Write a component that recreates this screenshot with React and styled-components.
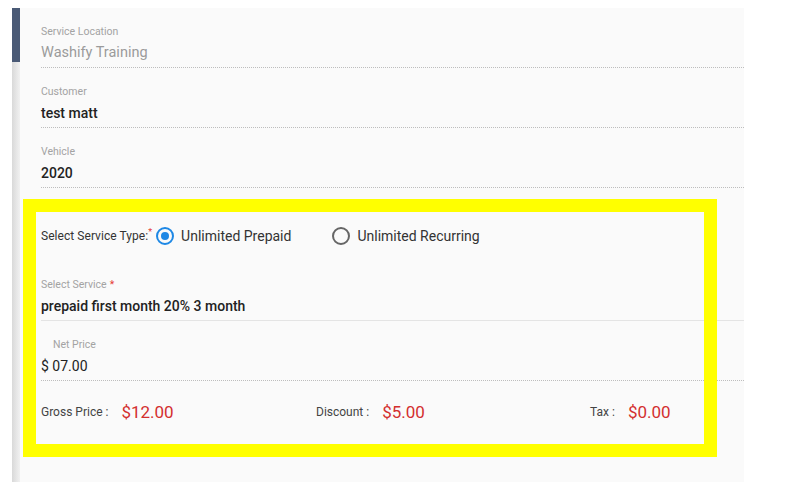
import React from 'react'
import styled, { createGlobalStyle } from 'styled-components'

const GlobalStyle = createGlobalStyle`
  html, body {
    margin: 0;
    padding: 0;
    background: #ffffff;
    font-family: Roboto, "Liberation Sans", Arial, sans-serif;
  }
`

const Page = styled.div`
  display: flex;
  padding: 8px 0 0 12px;
  height: 474px;
`

const SideStrip = styled.div`
  width: 8px;
  display: flex;
  flex-direction: column;
`

const SideActive = styled.div`
  height: 54px;
  background: #4a5a76;
`

const SideRest = styled.div`
  flex: 1;
  background: linear-gradient(to right, #d9d9d9, #f1f1f1);
`

const Panel = styled.section`
  position: relative;
  width: 724px;
  background: #fafafa;
`

const Field = styled.div`
  margin-left: 21px;
  padding: ${p => (p.flush ? '0' : '18px')} 0 4px;
  border-bottom: 1px ${p => (p.solid ? 'solid #e4e4e4' : 'dotted #bdbdbd')};
`

const Label = styled.div`
  font-size: 10.5px;
  line-height: 12px;
  color: #a3a3a3;
  padding-left: ${p => (p.indent ? '12px' : '0')};
`

const Required = styled.span`
  color: #e53935;
  margin-left: 3px;
`

const Value = styled.div`
  margin-top: 5px;
  font-size: ${p => (p.muted ? '14.5px' : '14px')};
  line-height: 20px;
  color: ${p => (p.muted ? '#9b9b9b' : '#222222')};
  font-weight: ${p => (p.strong ? 500 : 400)};
`

const TypeRow = styled.div`
  display: flex;
  align-items: center;
  height: 22px;
  margin: 37px 0 32px 21px;
`

const TypeLabel = styled.span`
  font-size: 12px;
  color: #333333;
  letter-spacing: 0.05px;
  margin-right: 4px;
`

const Star = styled.sup`
  color: #e53935;
  font-size: 9px;
  line-height: 0;
`

const RadioOption = styled.label`
  display: flex;
  align-items: center;
  font-size: 14px;
  color: #333333;
  margin-right: ${p => p.gap || 0}px;
`

const RadioCircle = styled.span`
  width: 14px;
  height: 14px;
  border-radius: 50%;
  border: 2px solid ${p => (p.checked ? '#1e88e5' : '#666666')};
  margin-right: 7px;
  display: flex;
  align-items: center;
  justify-content: center;

  &::after {
    content: '';
    width: 8px;
    height: 8px;
    border-radius: 50%;
    background: ${p => (p.checked ? '#1e88e5' : 'transparent')};
  }
`

const Totals = styled.div`
  display: grid;
  grid-template-columns: 275px 274px 1fr;
  align-items: center;
  height: 24px;
  margin: 19px 0 0 21px;
`

const TotalItem = styled.div`
  display: flex;
  align-items: center;
`

const TotalLabel = styled.span`
  font-size: 12px;
  color: #444444;
  margin-right: 13px;
`

const TotalValue = styled.span`
  font-size: 17px;
  color: #d32f2f;
`

const Highlight = styled.div`
  position: absolute;
  left: 3px;
  top: 191px;
  width: 694px;
  height: 258px;
  box-sizing: border-box;
  border: 13px solid #ffff00;
  pointer-events: none;
`

const fields = [
  { label: 'Service Location', value: 'Washify Training', muted: true },
  { label: 'Customer', value: 'test matt', strong: true },
  { label: 'Vehicle', value: '2020', strong: true },
]

const totals = [
  { label: 'Gross Price :', value: '$12.00' },
  { label: 'Discount :', value: '$5.00' },
  { label: 'Tax :', value: '$0.00' },
]

export default function App() {
  return (
    <>
      <GlobalStyle />
      <Page>
        <SideStrip>
          <SideActive />
          <SideRest />
        </SideStrip>
        <Panel>
          {fields.map(f => (
            <Field key={f.label}>
              <Label>{f.label}</Label>
              <Value muted={f.muted} strong={f.strong}>
                {f.value}
              </Value>
            </Field>
          ))}

          <TypeRow>
            <TypeLabel>
              Select Service Type:<Star>*</Star>
            </TypeLabel>
            <RadioOption gap={41}>
              <RadioCircle checked />
              Unlimited Prepaid
            </RadioOption>
            <RadioOption>
              <RadioCircle />
              Unlimited Recurring
            </RadioOption>
          </TypeRow>

          <Field solid flush>
            <Label>
              Select Service<Required>*</Required>
            </Label>
            <Value strong>prepaid first month 20% 3 month</Value>
          </Field>

          <Field>
            <Label indent>Net Price</Label>
            <Value>$ 07.00</Value>
          </Field>

          <Totals>
            {totals.map(t => (
              <TotalItem key={t.label}>
                <TotalLabel>{t.label}</TotalLabel>
                <TotalValue>{t.value}</TotalValue>
              </TotalItem>
            ))}
          </Totals>

          <Highlight />
        </Panel>
      </Page>
    </>
  )
}
